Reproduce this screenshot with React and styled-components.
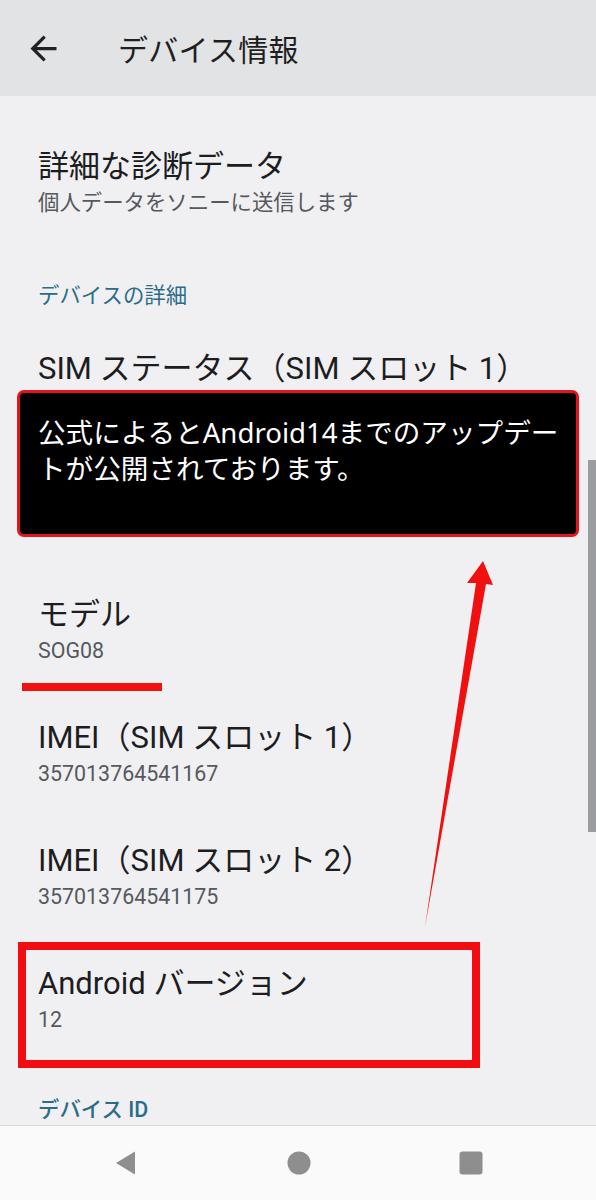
import React from "react";
import styled, { createGlobalStyle } from "styled-components";

const GlobalStyle = createGlobalStyle`
  body {
    margin: 0;
    background: #f0f0f3;
    font-family: "Roboto", "Noto Sans CJK JP", sans-serif;
  }
`;

const Screen = styled.div`
  position: relative;
  width: 596px;
  height: 1200px;
  display: flex;
  flex-direction: column;
  overflow: hidden;
  background: #f0f0f3;
`;

const AppBar = styled.header`
  height: 96px;
  flex: none;
  display: flex;
  align-items: center;
  background: #e2e3e5;
  padding-left: 24px;
  box-sizing: border-box;
`;

const BackButton = styled.svg`
  width: 39px;
  height: 39px;
  fill: #202124;
  margin-top: 1px;
`;

const Title = styled.h1`
  margin: 0 0 0 55px;
  font-size: 30px;
  font-weight: 400;
  color: #1f1f1f;
  letter-spacing: 0.3px;
`;

const List = styled.main`
  flex: 1;
  overflow: hidden;
  padding: 25px 0 0 38px;
`;

const Item = styled.div`
  padding: 26px 0;
  min-height: 71px;
`;

const ItemTitle = styled.div`
  font-size: 31px;
  line-height: 40px;
  color: #1d1d1f;
  white-space: nowrap;
`;

const ItemSub = styled.div`
  margin-top: 1px;
  font-size: 21.4px;
  line-height: 30px;
  color: #55595d;
`;

const Section = styled.div`
  padding: ${(p) => p.$top}px 0 14px;
  font-size: 21.4px;
  line-height: 26px;
  color: #2b6d88;
  font-weight: ${(p) => (p.$bold ? 500 : 400)};
`;

const Scrollbar = styled.div`
  position: absolute;
  right: 0;
  top: 460px;
  width: 8px;
  height: 372px;
  background: #9a9c9f;
`;

const NavBar = styled.nav`
  height: 74px;
  flex: none;
  border-top: 1px solid #d9d9db;
  background: #fafafa;
  display: grid;
  grid-template-columns: 252px 93px 251px;
  align-items: center;
  justify-items: center;
  position: relative;
  z-index: 2;
`;

const NavIcon = styled.svg`
  width: 26px;
  height: 26px;
  fill: #8e8e8e;
`;

const Note = styled.div`
  position: absolute;
  left: 17px;
  top: 390px;
  width: 562px;
  height: 147px;
  box-sizing: border-box;
  background: #000;
  border: 3px solid #e3141a;
  border-radius: 7px;
  padding: 21px 0 0 18px;
  font-family: "Noto Sans", "Noto Sans CJK JP", sans-serif;
  font-size: 27.6px;
  line-height: 36px;
  color: #fff;
  white-space: nowrap;
`;

const Underline = styled.div`
  position: absolute;
  left: 22px;
  top: 683px;
  width: 140px;
  height: 8px;
  background: #f01111;
`;

const Frame = styled.div`
  position: absolute;
  left: 18px;
  top: 942px;
  width: 462px;
  height: 126px;
  box-sizing: border-box;
  border: 8px solid #f20d12;
`;

const Overlay = styled.svg`
  position: absolute;
  left: 0;
  top: 0;
  width: 596px;
  height: 1200px;
  pointer-events: none;
`;

// the second SIM row sits under the note box, so it is left empty
const items = [
  { title: "SIM ステータス（SIM スロット 1）", sub: "" },
  { title: "", sub: "" },
  { title: "モデル", sub: "SOG08" },
  { title: "IMEI（SIM スロット 1）", sub: "357013764541167" },
  { title: "IMEI（SIM スロット 2）", sub: "357013764541175" },
  { title: "Android バージョン", sub: "12" },
];

export default function App() {
  return (
    <Screen>
      <GlobalStyle />
      <AppBar>
        <BackButton viewBox="0 0 24 24">
          <path d="M20 11H7.83l5.59-5.59L12 4l-8 8 8 8 1.41-1.41L7.83 13H20v-2z" />
        </BackButton>
        <Title>デバイス情報</Title>
      </AppBar>

      <List>
        <Item>
          <ItemTitle>詳細な診断データ</ItemTitle>
          <ItemSub>個人データをソニーに送信します</ItemSub>
        </Item>
        <Section $top={39}>デバイスの詳細</Section>
        {items.map((it, i) => (
          <Item key={i}>
            {it.title && <ItemTitle>{it.title}</ItemTitle>}
            {it.sub && <ItemSub>{it.sub}</ItemSub>}
          </Item>
        ))}
        <Section $top={36} $bold>
          デバイス ID
        </Section>
      </List>

      <NavBar>
        <NavIcon viewBox="0 0 26 26">
          <path d="M22 1.5v23L3 13z" />
        </NavIcon>
        <NavIcon viewBox="0 0 26 26">
          <circle cx="13" cy="13" r="11.5" />
        </NavIcon>
        <NavIcon viewBox="0 0 26 26">
          <rect x="1.5" y="1.5" width="23" height="23" rx="3" />
        </NavIcon>
      </NavBar>

      <Scrollbar />
      <Note>
        公式によるとAndroid14までのアップデー
        <br />
        トが公開されております。
      </Note>
      <Underline />
      <Frame />
      <Overlay viewBox="0 0 596 1200">
        <polygon
          points="483,561 493,585 486,584 425,927 476,583 467,583"
          fill="#f01010"
        />
      </Overlay>
    </Screen>
  );
}
